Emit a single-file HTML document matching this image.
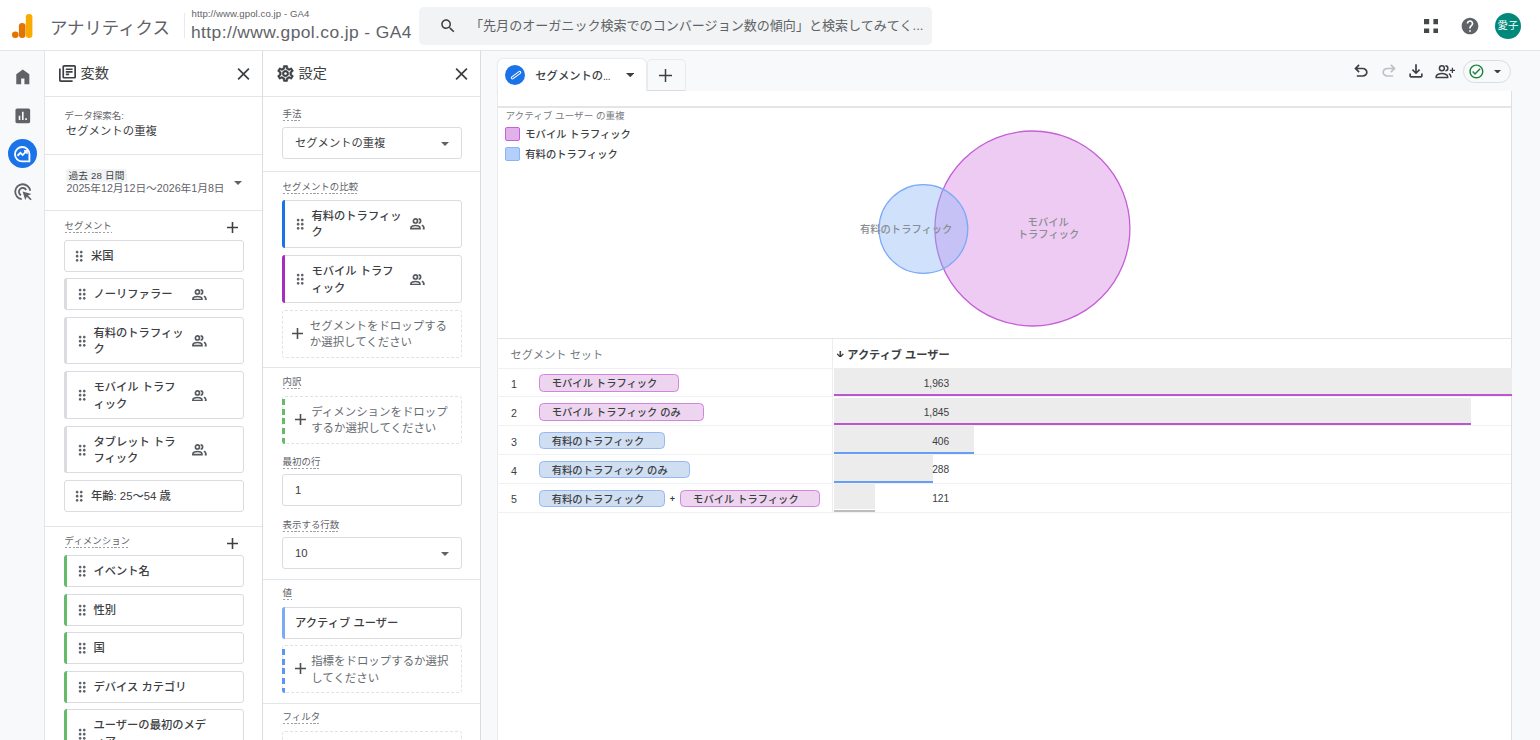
<!DOCTYPE html>
<html lang="ja">
<head>
<meta charset="utf-8">
<title>アナリティクス</title>
<style>
*{box-sizing:border-box;margin:0;padding:0}
html,body{width:1540px;height:740px;overflow:hidden;background:#f8f9fa}
body{font-family:"Liberation Sans","Noto Sans CJK JP",sans-serif;color:#3c4043;position:relative;font-size:11.2px}
.abs{position:absolute}
svg{display:block}
/* header */
#hdr{position:absolute;left:0;top:0;width:1540px;height:51px;background:#fff;border-bottom:1px solid #e3e5e8}
#brand{position:absolute;left:50px;top:15.5px;font-size:17.4px;line-height:24px;color:#5f6368;white-space:nowrap}
#hsep{position:absolute;left:184px;top:13px;width:1px;height:25px;background:#e8eaed}
#prop1{position:absolute;left:191.5px;top:8.2px;letter-spacing:.08px;font-size:9.6px;line-height:12px;color:#5f6368;white-space:nowrap}
#prop2{position:absolute;left:191px;top:20.5px;letter-spacing:.41px;font-size:17.4px;line-height:22px;color:#5f6368;white-space:nowrap}
#search{position:absolute;left:419px;top:7px;width:513px;height:37.5px;border-radius:5px;background:#f1f3f4}
#search .txt{position:absolute;left:51px;top:0;line-height:37px;font-size:13.05px;color:#5f6368;white-space:nowrap}
/* nav */
#nav{position:absolute;left:0;top:51px;width:45px;height:689px;background:#f8f9fa;border-right:1px solid #e3e5e8}
/* panels */
.panel{position:absolute;top:51px;height:689px;width:218px;background:#fff;border-right:1px solid #dadce0}
#pvar{left:45px;width:218px}
#pset{left:263px;width:217.5px}
.ptitle{position:absolute;left:35.500px;top:12.200px;font-size:14.2px;line-height:20px;color:#3c4043;white-space:nowrap}
.hr{position:absolute;left:0;width:100%;height:1px;background:#e3e5e8}
.lbl{position:absolute;font-size:9.45px;line-height:12px;color:#5f6368;white-space:nowrap;padding-bottom:1px;margin-top:-.7px;margin-left:-.4px;background:repeating-linear-gradient(90deg,#9aa0a6 0 2.2px,transparent 2.2px 3.8px) left bottom/100% 1px no-repeat}
.card{position:absolute;left:19px;width:180px;border:1px solid #dadce0;border-radius:3px;background:#fff;font-size:11.2px;color:#3c4043}
.card .t{position:absolute;left:26px;line-height:16.5px;white-space:nowrap;font-weight:500;font-size:11.3px}
.card.wb .t{left:28.4px}
.card.wb .dh{left:10.5px}
.card.one{height:32px}
.card.one .t{top:7px}
.card.two{height:47.8px}
.card.two .t{top:7px}
.card .dh{position:absolute;left:8.3px;width:12.4px;height:12.4px;margin-top:-.4px}
.card.one .dh{top:9.5px}
.card.two .dh{top:17.5px}
.card .pp{position:absolute;width:15.8px;height:11.5px;margin-top:-.5px}
.bar{position:absolute;left:-1px;top:-1px;bottom:-1px;width:3px;border-radius:3px 0 0 3px}
.drop{position:absolute;left:19px;width:180px;border:1px dashed #e0e2e5;border-radius:3px;font-size:11.45px;color:#686c71}
.drop .t{position:absolute;left:26.8px;top:7px;line-height:16.5px;white-space:nowrap}
.drop.wb .t{left:28.2px}
.drop.wb .plus{left:11.5px}
.drop .plus{position:absolute;left:9px;top:17.3px}
.dbar{position:absolute;left:-1px;top:2.5px;bottom:-1px;width:3.4px;border-radius:0 0 0 3px}

/* main */
#canvas{position:absolute;left:497px;top:91px;width:1014.5px;height:660px;background:#fff;border-left:1px solid #e8eaed;border-right:1px solid #e0e0e0}
#tabA{position:absolute;left:498px;top:58.5px;width:147.500px;height:33px;background:#fff;border-radius:5px 5px 0 0;box-shadow:0 0 2px rgba(60,64,67,.25)}
#tabA:after{content:"";position:absolute;left:0;right:-3px;bottom:-4px;height:4px;background:#fff}
#tabB{position:absolute;left:647px;top:58.5px;width:39px;height:32.5px;background:#f8f9fa;border:1px solid #e8eaed;border-bottom:1px solid #dadce0;border-radius:5px 5px 0 0}
#cline{position:absolute;left:497px;top:105.5px;width:1014px;height:2px;background:#e4e5e7}
.lg{position:absolute;left:525.3px;font-size:10.3px;line-height:14px;font-weight:500;color:#3c4043;white-space:nowrap}
.sw{position:absolute;left:505px;width:15px;height:14.6px;border-radius:2px}
.th{position:absolute;font-size:11.2px;line-height:14px;white-space:nowrap}
.rl{position:absolute;left:497px;width:1014px;height:1px;background:#f0f1f3}
.rn{position:absolute;left:511px;font-size:10.7px;line-height:14px;color:#3c4043;font-weight:500}
.chip{position:absolute;height:17.6px;border-radius:4.5px;font-size:10.3px;line-height:18.4px;font-weight:500;color:#3c4043;padding-left:12.1px;white-space:nowrap}
.chip.m{background:#edd5f0;border:1.6px solid #d384de}
.chip.p{background:#d0def2;border:1.6px solid #96b8f5}
.bg{position:absolute;left:833.5px;height:25.6px;background:#ececec}
.ul{position:absolute;left:833.5px;height:2px}
.val{position:absolute;left:860px;width:89.2px;text-align:right;font-size:10.2px;line-height:14px;color:#3c4043;white-space:nowrap}
</style>
</head>
<body>
<!-- HEADER -->
<div id="hdr">
  <svg class="abs" style="left:12px;top:13.5px" width="21" height="24" viewBox="0 0 21 24">
    <rect x="13.8" y="0" width="6.6" height="24" rx="3.3" fill="#f9ab00"/>
    <rect x="6.9" y="9" width="6.6" height="15" rx="3.3" fill="#e37400"/>
    <circle cx="3.3" cy="20.7" r="3.3" fill="#e37400"/>
  </svg>
  <div id="brand">アナリティクス</div>
  <div id="hsep"></div>
  <div id="prop1">http://www.gpol.co.jp - GA4</div>
  <div id="prop2">http://www.gpol.co.jp - GA4</div>
  <div id="search">
    <svg class="abs" style="left:19.5px;top:9.5px" width="18" height="18" viewBox="0 0 24 24"><path fill="#3c4043" d="M15.5 14h-.79l-.28-.27C15.41 12.59 16 11.11 16 9.5 16 5.91 13.09 3 9.5 3S3 5.91 3 9.5 5.91 16 9.5 16c1.61 0 3.09-.59 4.23-1.57l.27.28v.79l5 4.99L20.49 19l-4.99-5zm-6 0C7.01 14 5 11.99 5 9.5S7.01 5 9.5 5 14 7.01 14 9.5 11.99 14 9.5 14z"/></svg>
    <div class="txt">「先月のオーガニック検索でのコンバージョン数の傾向」と検索してみてく...</div>
  </div>
</div>
<!-- NAV -->
<div id="nav">
  <svg class="abs" style="left:12.700px;top:16.200px" width="19.600" height="19.600" viewBox="0 0 24 24"><path fill="#5f6368" d="M4 21V9l8-6 8 6v12h-6v-7h-4v7z"/></svg>
  <svg class="abs" style="left:12.700px;top:54.600px" width="19.600" height="19.600" viewBox="0 0 24 24"><path fill="#5f6368" d="M19 3H5c-1.1 0-2 .9-2 2v14c0 1.1.9 2 2 2h14c1.1 0 2-.9 2-2V5c0-1.1-.9-2-2-2zM9 17H7v-5h2v5zm4 0h-2V7h2v10zm4 0h-2v-2h2v2z"/></svg>
  <div class="abs" style="left:8px;top:88.300px;width:29px;height:29px;border-radius:50%;background:#1a73e8"></div>
  <svg class="abs" style="left:12.300px;top:92.600px" width="20.400" height="20.400" viewBox="0 0 24 24" fill="none" stroke="#fff" stroke-width="2.2"><path d="M20.500 12a8.500 8.500 0 1 0-8.500 8.500h8.500z" stroke-linejoin="round"/><path d="M6.5 13.8l3.4-3.4 2.6 2.6 4.6-4.6" stroke-width="2.2"/><path d="M14.2 8h3.4v3.4" stroke-width="2"/></svg>
  <svg class="abs" style="left:12.500px;top:131.300px" width="20" height="20" viewBox="0 0 24 24" fill="none" stroke="#5f6368" stroke-width="2.2"><path d="M20.6 10.5A9 9 0 1 0 10.5 20.6"/><path d="M15.8 9.6A4.6 4.6 0 1 0 9.6 15.8"/><path d="M11.5 11.5l3.2 10.2 1.9-4.1 4.4 4.4 1.4-1.4-4.4-4.4 4.1-1.9z" fill="#5f6368" stroke="none"/></svg>
</div>
<!-- VARIABLES PANEL -->
<div class="panel" id="pvar">
  <svg class="abs" style="left:14px;top:13.700px" width="17" height="17" viewBox="2 2 20 20"><path fill="#3c4043" d="M4 6H2v14c0 1.100.900 2 2 2h14v-2H4V6zm16-4H8c-1.100 0-2 .900-2 2v12c0 1.100.900 2 2 2h12c1.100 0 2-.900 2-2V4c0-1.100-.900-2-2-2zm0 14H8V4h12v12zM10 9h8v2h-8zm0 3h4v2h-4zm0-6h8v2h-8z"/></svg>
  <div class="ptitle">変数</div>
  <svg class="abs" style="left:192px;top:17px" width="13" height="12" viewBox="5 5 14 14"><path fill="#3c4043" d="M19 6.410L17.590 5 12 10.590 6.410 5 5 6.410 10.590 12 5 17.590 6.410 19 12 13.410 17.590 19 19 17.590 13.410 12z"/></svg>
  <div class="hr" style="top:45px"></div>
  <div class="abs" style="left:19.300px;top:58.800px;font-size:9.500px;line-height:12px;color:#5f6368;white-space:nowrap">データ探索名:</div>
  <div class="abs" style="left:20.800px;top:71.500px;font-size:11.400px;line-height:16px;color:#3c4043;white-space:nowrap">セグメントの重複</div>
  <div class="hr" style="top:103px"></div>
  <div class="abs" style="left:21px;top:118px;width:61px;height:13px;background:#f1f3f4;border-radius:2px;font-size:9.6px;line-height:13px;color:#3c4043;text-align:center;white-space:nowrap;letter-spacing:.2px">過去 28 日間</div>
  <div class="abs" style="left:21.500px;top:129.200px;font-size:10.700px;line-height:16px;color:#5f6368;white-space:nowrap">2025年12月12日～2026年1月8日</div>
  <svg class="abs" style="left:188.700px;top:129.700px" width="8" height="4" viewBox="7 10 10 5"><path fill="#5f6368" d="M7 10l5 5 5-5z"/></svg>
  <div class="hr" style="top:159px"></div>
  <div class="lbl" style="left:20px;top:169.5px">セグメント</div>
  <svg class="abs" style="left:181.5px;top:171px" width="11" height="11" viewBox="5 5 14 14"><path fill="#3c4043" d="M19 13h-6v6h-2v-6H5v-2h6V5h2v6h6v2z"/></svg>
  <div class="card one" style="top:188.9px"><svg class="dh" viewBox="5 3 14 18"><path fill="#5f6368" d="M11 18c0 1.100-.900 2-2 2s-2-.900-2-2 .900-2 2-2 2 .900 2 2zm-2-8c-1.100 0-2 .900-2 2s.900 2 2 2 2-.900 2-2-.900-2-2-2zm0-6c-1.100 0-2 .900-2 2s.900 2 2 2 2-.900 2-2-.900-2-2-2zm6 4c1.100 0 2-.900 2-2s-.900-2-2-2-2 .900-2 2 .900 2 2 2zm0 2c-1.100 0-2 .900-2 2s.900 2 2 2 2-.900 2-2-.900-2-2-2zm0 6c-1.100 0-2 .900-2 2s.900 2 2 2 2-.900 2-2-.900-2-2-2z"/></svg><div class="t">米国</div></div>
  <div class="card one wb" style="top:227.3px"><div class="bar" style="background:#dadce0"></div><svg class="dh" viewBox="5 3 14 18"><path fill="#5f6368" d="M11 18c0 1.100-.900 2-2 2s-2-.900-2-2 .900-2 2-2 2 .900 2 2zm-2-8c-1.100 0-2 .900-2 2s.900 2 2 2 2-.900 2-2-.900-2-2-2zm0-6c-1.100 0-2 .900-2 2s.900 2 2 2 2-.900 2-2-.900-2-2-2zm6 4c1.100 0 2-.900 2-2s-.900-2-2-2-2 .900-2 2 .900 2 2 2zm0 2c-1.100 0-2 .900-2 2s.900 2 2 2 2-.900 2-2-.900-2-2-2zm0 6c-1.100 0-2 .900-2 2s.900 2 2 2 2-.900 2-2-.900-2-2-2z"/></svg><div class="t">ノーリファラー</div><svg class="pp" style="left:127.3px;top:10px" viewBox="0 0 16 11.5" fill="none" stroke="#55595e" stroke-width="1.7"><circle cx="5.500" cy="2.950" r="2.050"/><path d="M.900 10.650v-.700c0-1.700 2.900-2.450 4.600-2.450s4.600.750 4.600 2.450v.700z"/><path d="M8.700 .900a2.050 2.050 0 0 1 0 4.100"/><path d="M12 7.300c1.300.500 2.100 1.400 2.100 2.600v.750h-1.200" stroke-width="1.600"/></svg></div>
  <div class="card two wb" style="top:265.7px"><div class="bar" style="background:#dadce0"></div><svg class="dh" viewBox="5 3 14 18"><path fill="#5f6368" d="M11 18c0 1.100-.900 2-2 2s-2-.900-2-2 .900-2 2-2 2 .900 2 2zm-2-8c-1.100 0-2 .900-2 2s.900 2 2 2 2-.900 2-2-.900-2-2-2zm0-6c-1.100 0-2 .900-2 2s.900 2 2 2 2-.900 2-2-.900-2-2-2zm6 4c1.100 0 2-.900 2-2s-.900-2-2-2-2 .900-2 2 .900 2 2 2zm0 2c-1.100 0-2 .900-2 2s.900 2 2 2 2-.900 2-2-.900-2-2-2zm0 6c-1.100 0-2 .900-2 2s.900 2 2 2 2-.900 2-2-.900-2-2-2z"/></svg><div class="t">有料のトラフィッ<br>ク</div><svg class="pp" style="left:127.3px;top:18px" viewBox="0 0 16 11.5" fill="none" stroke="#55595e" stroke-width="1.7"><circle cx="5.500" cy="2.950" r="2.050"/><path d="M.900 10.650v-.700c0-1.700 2.900-2.450 4.600-2.450s4.600.750 4.600 2.450v.700z"/><path d="M8.700 .900a2.050 2.050 0 0 1 0 4.100"/><path d="M12 7.300c1.300.500 2.100 1.400 2.100 2.600v.750h-1.200" stroke-width="1.600"/></svg></div>
  <div class="card two wb" style="top:320.2px"><div class="bar" style="background:#dadce0"></div><svg class="dh" viewBox="5 3 14 18"><path fill="#5f6368" d="M11 18c0 1.100-.900 2-2 2s-2-.900-2-2 .900-2 2-2 2 .900 2 2zm-2-8c-1.100 0-2 .900-2 2s.900 2 2 2 2-.900 2-2-.900-2-2-2zm0-6c-1.100 0-2 .900-2 2s.900 2 2 2 2-.900 2-2-.900-2-2-2zm6 4c1.100 0 2-.900 2-2s-.900-2-2-2-2 .900-2 2 .900 2 2 2zm0 2c-1.100 0-2 .900-2 2s.900 2 2 2 2-.900 2-2-.900-2-2-2zm0 6c-1.100 0-2 .900-2 2s.900 2 2 2 2-.900 2-2-.900-2-2-2z"/></svg><div class="t">モバイル トラフ<br>ィック</div><svg class="pp" style="left:127.3px;top:18px" viewBox="0 0 16 11.5" fill="none" stroke="#55595e" stroke-width="1.7"><circle cx="5.500" cy="2.950" r="2.050"/><path d="M.900 10.650v-.700c0-1.700 2.900-2.450 4.600-2.450s4.600.750 4.600 2.450v.700z"/><path d="M8.700 .900a2.050 2.050 0 0 1 0 4.100"/><path d="M12 7.300c1.300.500 2.100 1.400 2.100 2.600v.750h-1.200" stroke-width="1.600"/></svg></div>
  <div class="card two wb" style="top:374.7px"><div class="bar" style="background:#dadce0"></div><svg class="dh" viewBox="5 3 14 18"><path fill="#5f6368" d="M11 18c0 1.100-.900 2-2 2s-2-.900-2-2 .900-2 2-2 2 .900 2 2zm-2-8c-1.100 0-2 .900-2 2s.900 2 2 2 2-.900 2-2-.900-2-2-2zm0-6c-1.100 0-2 .900-2 2s.900 2 2 2 2-.900 2-2-.900-2-2-2zm6 4c1.100 0 2-.900 2-2s-.900-2-2-2-2 .900-2 2 .900 2 2 2zm0 2c-1.100 0-2 .900-2 2s.900 2 2 2 2-.900 2-2-.900-2-2-2zm0 6c-1.100 0-2 .900-2 2s.900 2 2 2 2-.900 2-2-.900-2-2-2z"/></svg><div class="t">タブレット トラ<br>フィック</div><svg class="pp" style="left:127.3px;top:18px" viewBox="0 0 16 11.5" fill="none" stroke="#55595e" stroke-width="1.7"><circle cx="5.500" cy="2.950" r="2.050"/><path d="M.900 10.650v-.700c0-1.700 2.900-2.450 4.600-2.450s4.600.750 4.600 2.450v.700z"/><path d="M8.700 .900a2.050 2.050 0 0 1 0 4.100"/><path d="M12 7.300c1.300.500 2.100 1.400 2.100 2.600v.750h-1.200" stroke-width="1.600"/></svg></div>
  <div class="card one" style="top:429.2px"><svg class="dh" viewBox="5 3 14 18"><path fill="#5f6368" d="M11 18c0 1.100-.900 2-2 2s-2-.900-2-2 .900-2 2-2 2 .900 2 2zm-2-8c-1.100 0-2 .900-2 2s.900 2 2 2 2-.900 2-2-.900-2-2-2zm0-6c-1.100 0-2 .900-2 2s.900 2 2 2 2-.900 2-2-.900-2-2-2zm6 4c1.100 0 2-.900 2-2s-.900-2-2-2-2 .900-2 2 .900 2 2 2zm0 2c-1.100 0-2 .900-2 2s.900 2 2 2 2-.900 2-2-.900-2-2-2zm0 6c-1.100 0-2 .900-2 2s.900 2 2 2 2-.900 2-2-.900-2-2-2z"/></svg><div class="t">年齢: 25～54 歳</div></div>
  <div class="hr" style="top:475px"></div>
  <div class="lbl" style="left:20px;top:485px">ディメンション</div>
  <svg class="abs" style="left:181.5px;top:486.5px" width="11" height="11" viewBox="5 5 14 14"><path fill="#3c4043" d="M19 13h-6v6h-2v-6H5v-2h6V5h2v6h6v2z"/></svg>
  <div class="card one wb" style="top:504.1px"><div class="bar" style="background:#66bb6a"></div><svg class="dh" viewBox="5 3 14 18"><path fill="#5f6368" d="M11 18c0 1.100-.900 2-2 2s-2-.900-2-2 .900-2 2-2 2 .900 2 2zm-2-8c-1.100 0-2 .900-2 2s.900 2 2 2 2-.900 2-2-.900-2-2-2zm0-6c-1.100 0-2 .900-2 2s.900 2 2 2 2-.900 2-2-.900-2-2-2zm6 4c1.100 0 2-.900 2-2s-.900-2-2-2-2 .900-2 2 .900 2 2 2zm0 2c-1.100 0-2 .900-2 2s.900 2 2 2 2-.900 2-2-.900-2-2-2zm0 6c-1.100 0-2 .900-2 2s.900 2 2 2 2-.900 2-2-.900-2-2-2z"/></svg><div class="t">イベント名</div></div>
  <div class="card one wb" style="top:542.7px"><div class="bar" style="background:#66bb6a"></div><svg class="dh" viewBox="5 3 14 18"><path fill="#5f6368" d="M11 18c0 1.100-.900 2-2 2s-2-.900-2-2 .900-2 2-2 2 .900 2 2zm-2-8c-1.100 0-2 .900-2 2s.900 2 2 2 2-.900 2-2-.900-2-2-2zm0-6c-1.100 0-2 .900-2 2s.900 2 2 2 2-.900 2-2-.900-2-2-2zm6 4c1.100 0 2-.900 2-2s-.900-2-2-2-2 .900-2 2 .900 2 2 2zm0 2c-1.100 0-2 .900-2 2s.900 2 2 2 2-.900 2-2-.900-2-2-2zm0 6c-1.100 0-2 .900-2 2s.900 2 2 2 2-.900 2-2-.900-2-2-2z"/></svg><div class="t">性別</div></div>
  <div class="card one wb" style="top:581.2px"><div class="bar" style="background:#66bb6a"></div><svg class="dh" viewBox="5 3 14 18"><path fill="#5f6368" d="M11 18c0 1.100-.900 2-2 2s-2-.900-2-2 .900-2 2-2 2 .900 2 2zm-2-8c-1.100 0-2 .900-2 2s.900 2 2 2 2-.900 2-2-.900-2-2-2zm0-6c-1.100 0-2 .900-2 2s.900 2 2 2 2-.900 2-2-.900-2-2-2zm6 4c1.100 0 2-.900 2-2s-.900-2-2-2-2 .900-2 2 .900 2 2 2zm0 2c-1.100 0-2 .900-2 2s.900 2 2 2 2-.900 2-2-.900-2-2-2zm0 6c-1.100 0-2 .900-2 2s.900 2 2 2 2-.900 2-2-.900-2-2-2z"/></svg><div class="t">国</div></div>
  <div class="card one wb" style="top:619.8px"><div class="bar" style="background:#66bb6a"></div><svg class="dh" viewBox="5 3 14 18"><path fill="#5f6368" d="M11 18c0 1.100-.900 2-2 2s-2-.900-2-2 .900-2 2-2 2 .900 2 2zm-2-8c-1.100 0-2 .900-2 2s.900 2 2 2 2-.900 2-2-.900-2-2-2zm0-6c-1.100 0-2 .900-2 2s.900 2 2 2 2-.900 2-2-.900-2-2-2zm6 4c1.100 0 2-.900 2-2s-.900-2-2-2-2 .900-2 2 .900 2 2 2zm0 2c-1.100 0-2 .900-2 2s.900 2 2 2 2-.900 2-2-.900-2-2-2zm0 6c-1.100 0-2 .900-2 2s.900 2 2 2 2-.900 2-2-.900-2-2-2z"/></svg><div class="t">デバイス カテゴリ</div></div>
  <div class="card two wb" style="top:658.4px"><div class="bar" style="background:#66bb6a"></div><svg class="dh" viewBox="5 3 14 18"><path fill="#5f6368" d="M11 18c0 1.100-.900 2-2 2s-2-.900-2-2 .900-2 2-2 2 .900 2 2zm-2-8c-1.100 0-2 .900-2 2s.900 2 2 2 2-.900 2-2-.900-2-2-2zm0-6c-1.100 0-2 .900-2 2s.900 2 2 2 2-.900 2-2-.900-2-2-2zm6 4c1.100 0 2-.900 2-2s-.900-2-2-2-2 .900-2 2 .900 2 2 2zm0 2c-1.100 0-2 .900-2 2s.900 2 2 2 2-.900 2-2-.900-2-2-2zm0 6c-1.100 0-2 .900-2 2s.900 2 2 2 2-.900 2-2-.900-2-2-2z"/></svg><div class="t">ユーザーの最初のメデ<br>ィア</div></div>
</div>
<!-- SETTINGS PANEL -->
<div class="panel" id="pset">
  <svg class="abs" style="left:14px;top:13.700px" width="17" height="17" viewBox="1.5 1.5 21 21"><path fill="#3c4043" stroke="#3c4043" stroke-width=".7" d="M19.430 12.980c.040-.320.070-.640.070-.980 0-.340-.030-.660-.070-.980l2.110-1.650c.190-.150.240-.420.120-.640l-2-3.460c-.090-.160-.260-.250-.440-.250-.060 0-.120.010-.170.030l-2.490 1c-.520-.400-1.080-.730-1.690-.980l-.380-2.650C14.460 2.180 14.250 2 14 2h-4c-.250 0-.460.180-.490.420l-.380 2.650c-.610.250-1.170.590-1.690.980l-2.490-1c-.060-.020-.120-.030-.180-.030-.170 0-.340.090-.430.250l-2 3.460c-.130.220-.070.490.120.640l2.110 1.650c-.040.320-.070.650-.070.980 0 .330.030.660.070.980l-2.110 1.650c-.190.150-.240.420-.120.640l2 3.460c.090.160.260.250.440.250.060 0 .120-.010.170-.030l2.490-1c.520.400 1.080.730 1.690.980l.380 2.650c.030.240.240.420.490.420h4c.250 0 .460-.180.490-.420l.380-2.650c.610-.250 1.170-.590 1.690-.980l2.490 1c.060.020.120.030.180.030.170 0 .340-.090.430-.250l2-3.460c.120-.220.070-.490-.120-.640l-2.110-1.650zm-1.980-1.710c.040.310.050.520.050.730 0 .210-.020.430-.050.730l-.140 1.130.890.700 1.080.840-.700 1.210-1.270-.510-1.040-.420-.900.680c-.430.320-.840.560-1.250.730l-1.060.430-.160 1.130-.200 1.350h-1.400l-.190-1.350-.160-1.130-1.060-.430c-.430-.180-.830-.410-1.230-.710l-.910-.700-1.060.430-1.270.510-.700-1.210 1.080-.840.890-.700-.140-1.130c-.030-.310-.050-.540-.050-.740s.020-.430.050-.730l.140-1.130-.890-.700-1.080-.840.700-1.210 1.270.510 1.040.420.900-.680c.430-.320.840-.560 1.250-.730l1.060-.430.160-1.130.200-1.350h1.390l.190 1.350.160 1.130 1.060.430c.430.180.830.410 1.230.710l.910.700 1.060-.430 1.270-.510.700 1.210-1.070.850-.890.700.140 1.130zM12 8c-2.210 0-4 1.790-4 4s1.790 4 4 4 4-1.790 4-4-1.790-4-4-4zm0 6c-1.100 0-2-.900-2-2s.900-2 2-2 2 .900 2 2-.900 2-2 2z"/></svg>
  <div class="ptitle">設定</div>
  <svg class="abs" style="left:192px;top:17px" width="13" height="12" viewBox="5 5 14 14"><path fill="#3c4043" d="M19 6.410L17.590 5 12 10.590 6.410 5 5 6.410 10.590 12 5 17.590 6.410 19 12 13.410 17.590 19 19 17.590 13.410 12z"/></svg>
  <div class="hr" style="top:45px"></div>
  <div class="lbl" style="left:20px;top:58px">手法</div>
  <div class="card one" style="top:76.2px"><div class="t" style="left:12px;font-weight:400;color:#3c4043">セグメントの重複</div><svg class="abs" style="left:158px;top:13.5px" width="8" height="4" viewBox="7 10 10 5"><path fill="#5f6368" d="M7 10l5 5 5-5z"/></svg></div>
  <div class="hr" style="top:120px"></div>
  <div class="lbl" style="left:20px;top:130.5px">セグメントの比較</div>
  <div class="card two wb" style="top:148.8px"><div class="bar" style="background:#1a73e8"></div><svg class="dh" viewBox="5 3 14 18"><path fill="#5f6368" d="M11 18c0 1.100-.900 2-2 2s-2-.900-2-2 .900-2 2-2 2 .900 2 2zm-2-8c-1.100 0-2 .900-2 2s.900 2 2 2 2-.900 2-2-.900-2-2-2zm0-6c-1.100 0-2 .900-2 2s.900 2 2 2 2-.900 2-2-.900-2-2-2zm6 4c1.100 0 2-.900 2-2s-.900-2-2-2-2 .900-2 2 .900 2 2 2zm0 2c-1.100 0-2 .900-2 2s.900 2 2 2 2-.900 2-2-.900-2-2-2zm0 6c-1.100 0-2 .900-2 2s.900 2 2 2 2-.900 2-2-.900-2-2-2z"/></svg><div class="t">有料のトラフィッ<br>ク</div><svg class="pp" style="left:127.3px;top:18px" viewBox="0 0 16 11.5" fill="none" stroke="#55595e" stroke-width="1.7"><circle cx="5.500" cy="2.950" r="2.050"/><path d="M.900 10.650v-.700c0-1.700 2.900-2.450 4.600-2.450s4.600.750 4.600 2.450v.700z"/><path d="M8.700 .900a2.050 2.050 0 0 1 0 4.100"/><path d="M12 7.300c1.300.500 2.100 1.400 2.100 2.600v.750h-1.200" stroke-width="1.600"/></svg></div>
  <div class="card two wb" style="top:204.2px"><div class="bar" style="background:#a72cc4"></div><svg class="dh" viewBox="5 3 14 18"><path fill="#5f6368" d="M11 18c0 1.100-.900 2-2 2s-2-.900-2-2 .900-2 2-2 2 .900 2 2zm-2-8c-1.100 0-2 .900-2 2s.900 2 2 2 2-.900 2-2-.900-2-2-2zm0-6c-1.100 0-2 .900-2 2s.900 2 2 2 2-.900 2-2-.900-2-2-2zm6 4c1.100 0 2-.900 2-2s-.900-2-2-2-2 .900-2 2 .900 2 2 2zm0 2c-1.100 0-2 .900-2 2s.900 2 2 2 2-.900 2-2-.900-2-2-2zm0 6c-1.100 0-2 .900-2 2s.900 2 2 2 2-.900 2-2-.900-2-2-2z"/></svg><div class="t">モバイル トラフ<br>ィック</div><svg class="pp" style="left:127.3px;top:18px" viewBox="0 0 16 11.5" fill="none" stroke="#55595e" stroke-width="1.7"><circle cx="5.500" cy="2.950" r="2.050"/><path d="M.900 10.650v-.700c0-1.700 2.900-2.450 4.600-2.450s4.600.750 4.600 2.450v.700z"/><path d="M8.700 .900a2.050 2.050 0 0 1 0 4.100"/><path d="M12 7.300c1.300.500 2.100 1.400 2.100 2.600v.750h-1.200" stroke-width="1.600"/></svg></div>
  <div class="drop" style="top:258.5px;height:48px"><svg class="plus" width="11" height="11" viewBox="5 5 14 14"><path fill="#4a4d51" d="M19 13h-6v6h-2v-6H5v-2h6V5h2v6h6v2z"/></svg><div class="t">セグメントをドロップする<br>か選択してください</div></div>
  <div class="hr" style="top:316px"></div>
  <div class="lbl" style="left:20px;top:325.5px">内訳</div>
  <div class="drop wb" style="top:344.5px;height:48px"><div class="dbar" style="background:repeating-linear-gradient(180deg,#66bb6a 0 6px,transparent 6px 9.7px)"></div><svg class="plus" width="11" height="11" viewBox="5 5 14 14"><path fill="#4a4d51" d="M19 13h-6v6h-2v-6H5v-2h6V5h2v6h6v2z"/></svg><div class="t">ディメンションをドロップ<br>するか選択してください</div></div>
  <div class="lbl" style="left:20px;top:405.5px">最初の行</div>
  <div class="card one" style="top:423.2px"><div class="t" style="left:12px;font-weight:400;color:#3c4043">1</div></div>
  <div class="lbl" style="left:20px;top:468.5px">表示する行数</div>
  <div class="card one" style="top:486.3px"><div class="t" style="left:12px;font-weight:400;color:#3c4043">10</div><svg class="abs" style="left:158px;top:13.5px" width="8" height="4" viewBox="7 10 10 5"><path fill="#5f6368" d="M7 10l5 5 5-5z"/></svg></div>
  <div class="hr" style="top:528px"></div>
  <div class="lbl" style="left:20px;top:537px">値</div>
  <div class="card one wb" style="top:555.6px"><div class="bar" style="background:#7baaf7"></div><div class="t" style="left:12px">アクティブ ユーザー</div></div>
  <div class="drop wb" style="top:594px;height:48px"><div class="dbar" style="background:repeating-linear-gradient(180deg,#5b95f5 0 6px,transparent 6px 9.7px)"></div><svg class="plus" width="11" height="11" viewBox="5 5 14 14"><path fill="#4a4d51" d="M19 13h-6v6h-2v-6H5v-2h6V5h2v6h6v2z"/></svg><div class="t">指標をドロップするか選択<br>してください</div></div>
  <div class="hr" style="top:652px"></div>
  <div class="lbl" style="left:20px;top:661px">フィルタ</div>
  <div class="drop" style="top:680px;height:48px"></div>
</div>
<!-- MAIN -->
<div id="main">
<div id="canvas"></div>
<div id="tabA"></div><div id="tabB"></div>
<div class="abs" style="left:505px;top:64.700px;width:20.300px;height:20.300px;border-radius:50%;background:#1a73e8"></div>
<svg class="abs" style="left:505px;top:64.500px" width="21" height="21" viewBox="505 64.500 21 21" fill="none" stroke-linecap="round"><path d="M512.500 77.300L519.600 72" stroke="#fff" stroke-width="3.300"/><path d="M512.500 77.300L519.600 72" stroke="#1a73e8" stroke-width="1.200"/><path d="M513.700 76.300L514.400 77.200" stroke="#fff" stroke-width=".9" stroke-linecap="butt"/></svg>
<div class="abs" style="left:535.300px;top:68.300px;font-size:11.3px;line-height:16px;font-weight:500;color:#3c4043;white-space:nowrap">セグメントの<span style="letter-spacing:-.5px;font-size:10px">...</span></div>
<svg class="abs" style="left:625.5px;top:73px" width="8.5" height="4.3" viewBox="7 10 10 5"><path fill="#3c4043" d="M7 10l5 5 5-5z"/></svg>
<svg class="abs" style="left:659.300px;top:69px" width="13" height="13" viewBox="0 0 13 13"><path stroke="#3c4043" stroke-width="1.500" d="M6.500 0v13M0 6.500h13"/></svg>
<div id="cline"></div>
<svg class="abs" style="left:1350.650px;top:61.400px" width="20" height="20" viewBox="0 0 24 24"><path fill="#3c4043" d="M7 19v-2h7.100q1.575 0 2.738-1T18 13.500q0-1.500-1.162-2.500T14.100 10H7.800l2.600 2.600L9 14 4 9l5-5 1.400 1.400L7.800 8h6.300q2.425 0 4.163 1.575T20 13.500q0 2.350-1.737 3.925T14.100 19z"/></svg>
<svg class="abs" style="left:1379.300px;top:61.400px" width="20" height="20" viewBox="0 0 24 24"><path fill="#bdc1c6" d="M17 19v-2H9.900q-1.575 0-2.738-1T6 13.500q0-1.500 1.162-2.500T9.900 10h6.300l-2.600 2.600L15 14l5-5-5-5-1.400 1.400L16.200 8H9.900Q7.475 8 5.737 9.575T4 13.500q0 2.350 1.737 3.925T9.900 19z"/></svg>
<svg class="abs" style="left:1405.850px;top:61.300px" width="20" height="20" viewBox="0 0 24 24"><path fill="#3c4043" d="M12 16l-5-5 1.400-1.450 2.600 2.600V4h2v8.150l2.600-2.600L17 11zm-6 4q-.825 0-1.412-.587T4 18v-3h2v3h12v-3h2v3q0 .825-.587 1.413T18 20z"/></svg>
<svg class="abs" style="left:1434.5px;top:65px" width="21" height="13.5" viewBox="0 0 21 13.5" fill="none" stroke="#3c4043" stroke-width="1.5"><circle cx="6.9" cy="3.3" r="2.45"/><path d="M1.150 12.500v-1.100c0-1.900 3.600-2.900 5.750-2.900s5.750 1 5.750 2.900v1.100z"/><path d="M10.400 .850a2.450 2.450 0 0 1 0 4.900"/><path d="M13.900 8.600c1.200.600 1.900 1.500 1.900 2.800v1.100"/><path d="M17.400 2.800v5.200M14.800 5.400h5.200" stroke-width="1.3"/></svg>
<div class="abs" style="left:1463px;top:60px;width:48px;height:23px;border:1px solid #dadce0;border-radius:12px;background:#f8f9fa"></div>
<svg class="abs" style="left:1468.300px;top:62.900px" width="16.800" height="16.800" viewBox="0 0 24 24"><path fill="#188038" d="M12 2C6.480 2 2 6.480 2 12s4.480 10 10 10 10-4.480 10-10S17.520 2 12 2zm0 18c-4.410 0-8-3.590-8-8s3.590-8 8-8 8 3.590 8 8-3.590 8-8 8zm4.590-12.420L10 14.170l-2.590-2.580L6 13l4 4 8-8z"/></svg>
<svg class="abs" style="left:1494.300px;top:69.600px" width="7" height="3.700" viewBox="7 10 10 5"><path fill="#3c4043" d="M7 10l5 5 5-5z"/></svg>
<svg class="abs" style="left:1423.700px;top:18.500px" width="14.600" height="14.600" viewBox="0 0 14.600 14.600"><path fill="#454749" d="M0 0h5.200v5.200H0zM9.400 0h5.200v5.200H9.400zM0 9.400h5.200v5.200H0zM9.400 9.400h5.200v5.200H9.400z"/></svg>
<svg class="abs" style="left:1459.500px;top:16px" width="20" height="20" viewBox="0 0 24 24"><path fill="#5f6368" d="M12 2C6.480 2 2 6.480 2 12s4.480 10 10 10 10-4.480 10-10S17.520 2 12 2zm1 17h-2v-2h2v2zm2.070-7.750l-.900.920C13.450 12.900 13 13.500 13 15h-2v-.500c0-1.100.450-2.100 1.170-2.830l1.240-1.260c.370-.360.590-.860.590-1.410 0-1.100-.900-2-2-2s-2 .900-2 2H8c0-2.210 1.790-4 4-4s4 1.790 4 4c0 .880-.360 1.680-.930 2.250z"/></svg>
<div class="abs" style="left:1495px;top:13px;width:26px;height:26px;border-radius:50%;background:#00897b;color:#fff;font-size:10.4px;line-height:26px;text-align:center;white-space:nowrap">愛子</div>
<div class="abs" style="left:505.5px;top:109px;font-size:9.6px;line-height:14px;color:#757a7f;white-space:nowrap">アクティブ ユーザー の重複</div>
<div class="sw" style="top:126.500px;background:#e1b1e9;border:1px solid #c662d8"></div><div class="lg" style="top:127.800px">モバイル トラフィック</div>
<div class="sw" style="top:146.500px;background:#b3cffa;border:1px solid #8ab4f8"></div><div class="lg" style="top:147.800px">有料のトラフィック</div>
<svg class="abs" style="left:850px;top:120px" width="300" height="215" viewBox="850 120 300 215" font-family="'Liberation Sans','Noto Sans CJK JP',sans-serif">
  <circle cx="1032.4" cy="228.5" r="97.5" fill="#d682e3" fill-opacity=".42" stroke="#c55fd6" stroke-width="1.3"/>
  <circle cx="923.4" cy="229" r="44.4" fill="#8ab4f8" fill-opacity=".4" stroke="#7baaf7" stroke-width="1.3"/>
  <text x="906.2" y="233" font-size="10.3" fill="#8a8d91" text-anchor="middle" font-weight="500">有料のトラフィック</text>
  <text x="1048.2" y="226" font-size="10.3" fill="#8a8d91" text-anchor="middle" font-weight="500">モバイル</text>
  <text x="1048.5" y="238" font-size="10.3" fill="#8a8d91" text-anchor="middle" font-weight="500">トラフィック</text>
</svg>
<div class="rl" style="top:338px;background:#e4e5e7"></div>
<div class="th" style="left:510.600px;top:348.200px;color:#74787d">セグメント セット</div>
<svg class="abs" style="left:837.300px;top:350.600px" width="6.500" height="6.500" viewBox="4 4 16 16"><path fill="#202124" stroke="#202124" stroke-width="1.200" d="M20 12l-1.410-1.410L13 16.170V4h-2v12.170l-5.580-5.590L4 12l8 8 8-8z"/></svg>
<div class="th" style="left:847.300px;top:348.300px;color:#3c4043;font-weight:700">アクティブ ユーザー</div>
<div class="abs" style="left:831.500px;top:339px;width:1px;height:173.500px;background:#eceef0"></div>
<div class="rl" style="top:367.5px"></div>
<div class="bg" style="top:367.700px;width:678.0px;height:26.600px"></div>
<div class="ul" style="top:394.3px;width:678.0px;background:#bb55d0"></div>
<div class="rn" style="top:377.2px">1</div>
<div class="chip m" style="left:538.700px;top:374.3px;width:140.5px">モバイル トラフィック</div>
<div class="val" style="top:377.0px">1,963</div>
<div class="rl" style="top:396.3px"></div>
<div class="bg" style="top:397.5px;width:637.2px"></div>
<div class="ul" style="top:423.1px;width:637.2px;background:#bb55d0"></div>
<div class="rn" style="top:406.0px">2</div>
<div class="chip m" style="left:538.700px;top:403.1px;width:165.5px">モバイル トラフィック のみ</div>
<div class="val" style="top:405.8px">1,845</div>
<div class="rl" style="top:425.1px"></div>
<div class="bg" style="top:426.3px;width:140.2px"></div>
<div class="ul" style="top:451.9px;width:140.2px;background:#669df6"></div>
<div class="rn" style="top:434.8px">3</div>
<div class="chip p" style="left:538.700px;top:431.9px;width:126.0px">有料のトラフィック</div>
<div class="val" style="top:434.6px">406</div>
<div class="rl" style="top:453.9px"></div>
<div class="bg" style="top:455.1px;width:99.5px"></div>
<div class="ul" style="top:480.7px;width:99.5px;background:#669df6"></div>
<div class="rn" style="top:463.6px">4</div>
<div class="chip p" style="left:538.700px;top:460.7px;width:151.5px">有料のトラフィック のみ</div>
<div class="val" style="top:463.4px">288</div>
<div class="rl" style="top:482.7px"></div>
<div class="bg" style="top:483.9px;width:41.8px"></div>
<div class="ul" style="top:509.5px;width:41.8px;background:#bdbdbd"></div>
<div class="rn" style="top:492.4px">5</div>
<div class="chip p" style="left:538.700px;top:489.5px;width:126.0px">有料のトラフィック</div>
<div class="abs" style="left:669.7px;top:491.7px;font-size:9px;line-height:14px;font-weight:700;color:#3c4043">+</div>
<div class="chip m" style="left:680px;top:489.5px;width:140.3px">モバイル トラフィック</div>
<div class="val" style="top:492.2px">121</div>
<div class="rl" style="top:511.5px"></div>
</div>
</body>
</html>
